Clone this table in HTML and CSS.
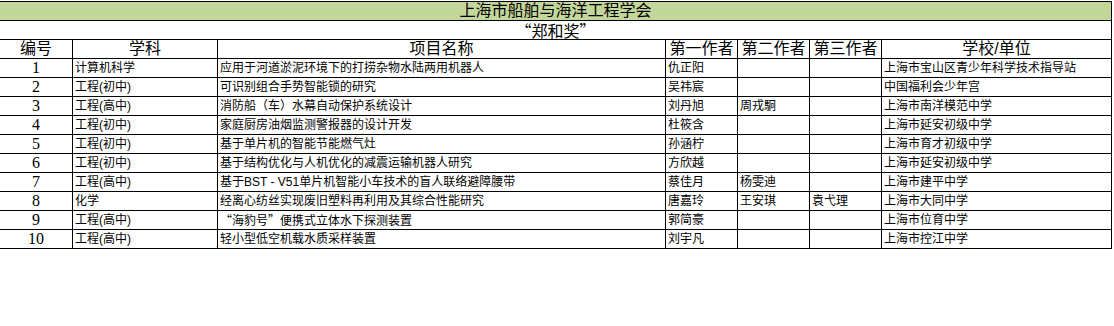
FILE: index.html
```html
<!DOCTYPE html>
<html lang="zh-CN">
<head>
  <meta charset="UTF-8" />
  <title>上海市船舶与海洋工程学会 郑和奖</title>
  <link rel="stylesheet" href="styles.css">
</head>
<body>
  <table class="sheet">
    <colgroup>
      <col class="c-no"><col class="c-subject"><col class="c-project">
      <col class="c-author"><col class="c-author"><col class="c-author">
      <col class="c-school">
    </colgroup>
    <tr class="title-row"><td colspan="7">上海市船舶与海洋工程学会</td></tr>
    <tr class="award-row"><td class="cjk" colspan="7">“郑和奖”</td></tr>
    <tr class="head-row">
      <td>编号</td><td>学科</td><td>项目名称</td><td>第一作者</td><td>第二作者</td><td>第三作者</td><td>学校/单位</td>
    </tr>
    <tr><td class="no">1</td><td>计算机科学</td><td>应用于河道淤泥环境下的打捞杂物水陆两用机器人</td><td>仇正阳</td><td></td><td></td><td>上海市宝山区青少年科学技术指导站</td></tr>
    <tr><td class="no">2</td><td>工程(初中)</td><td>可识别组合手势智能锁的研究</td><td>吴祎宸</td><td></td><td></td><td>中国福利会少年宫</td></tr>
    <tr><td class="no">3</td><td>工程(高中)</td><td>消防船（车）水幕自动保护系统设计</td><td>刘丹旭</td><td>周戎駉</td><td></td><td>上海市南洋模范中学</td></tr>
    <tr><td class="no">4</td><td>工程(初中)</td><td>家庭厨房油烟监测警报器的设计开发</td><td>杜筱含</td><td></td><td></td><td>上海市延安初级中学</td></tr>
    <tr><td class="no">5</td><td>工程(初中)</td><td>基于单片机的智能节能燃气灶</td><td>孙涵柠</td><td></td><td></td><td>上海市育才初级中学</td></tr>
    <tr><td class="no">6</td><td>工程(初中)</td><td>基于结构优化与人机优化的减震运输机器人研究</td><td>方欣越</td><td></td><td></td><td>上海市延安初级中学</td></tr>
    <tr><td class="no">7</td><td>工程(高中)</td><td>基于BST - V51单片机智能小车技术的盲人联络避障腰带</td><td>蔡佳月</td><td>杨雯迪</td><td></td><td>上海市建平中学</td></tr>
    <tr><td class="no">8</td><td>化学</td><td>经离心纺丝实现废旧塑料再利用及其综合性能研究</td><td>唐嘉玲</td><td>王安琪</td><td>袁弋理</td><td>上海市大同中学</td></tr>
    <tr><td class="no">9</td><td>工程(高中)</td><td class="cjk">“海豹号”便携式立体水下探测装置</td><td>郭简豪</td><td></td><td></td><td>上海市位育中学</td></tr>
    <tr><td class="no">10</td><td>工程(高中)</td><td>轻小型低空机载水质采样装置</td><td>刘宇凡</td><td></td><td></td><td>上海市控江中学</td></tr>
  </table>
</body>
</html>
```

FILE: styles.css
```css
body {
  margin: 0;
  background: #ffffff;
  color: #000000;
  font-family: "Liberation Sans", "Noto Sans CJK SC", sans-serif;
  overflow: hidden;
}
.sheet {
  border-collapse: collapse;
  table-layout: fixed;
  width: 1113px;
  margin: 1px 0 0 -1px;
}
.c-no { width: 73px; }
.c-subject { width: 145px; }
.c-project { width: 448px; }
.c-author { width: 72px; }
.c-school { width: 230px; }
.sheet td {
  border: 1px solid #000000;
  height: 18px;
  padding: 0 0 0 2px;
  font-size: 12px;
  line-height: 18px;
  white-space: nowrap;
  overflow: hidden;
  vertical-align: middle;
}
.sheet td.cjk {
  font-family: "Noto Sans CJK SC", sans-serif;
}
.title-row td,
.award-row td,
.head-row td {
  font-size: 16px;
  text-align: center;
  padding: 0;
  overflow: visible;
}
.title-row td {
  background: #c4d79b;
}
.sheet td.no {
  font-family: "Liberation Serif", serif;
  font-size: 16px;
  text-align: center;
  padding: 0;
}
```
